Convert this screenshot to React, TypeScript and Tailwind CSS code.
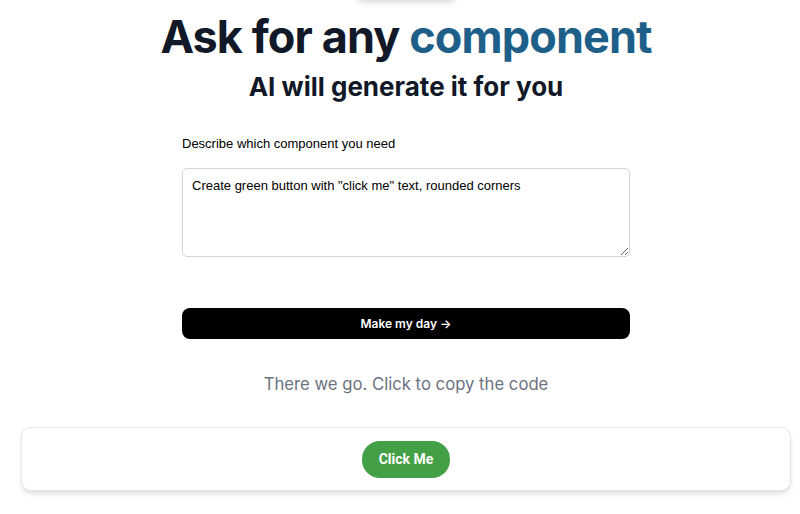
import React from "react";

export default function App() {
  return (
    <div className="w-[800px] h-[514px] overflow-hidden bg-white">
      <div className="w-[812px] flex flex-col items-center" style={{ fontFamily: "Inter, sans-serif" }}>
        <div className="w-[100px] h-[10px] -mt-[10px] rounded-full bg-white shadow-md" />
        <h1 className="mt-[14px] text-[45px] leading-[45px] font-bold tracking-[-0.02em] text-[#111827]">
          Ask for any <span className="text-[#1e5f8a]">component</span>
        </h1>
        <h2 className="mt-[12px] text-[26px] leading-[32px] font-bold text-[#111827]">
          AI will generate it for you
        </h2>
        <div className="w-[448px] mt-[31px] flex flex-col" style={{ fontFamily: "'Liberation Sans', Arial, sans-serif" }}>
          <label className="text-[13px] leading-[20px] font-medium text-black">Describe which component you need</label>
          <textarea
            className="mt-[14px] h-[89px] w-full resize-y rounded-[5px] border border-[#d1d5db] px-[9px] pt-[8px] pb-[6px] text-[13px] leading-[18px] text-black outline-none"
            defaultValue={'Create green button with "click me" text, rounded corners'}
            style={{ fontFamily: "'Liberation Sans', Arial, sans-serif" }}
          />
          <button
            className="mt-[51px] h-[31px] w-full rounded-[8px] bg-black text-white text-[12px] font-semibold"
            style={{ fontFamily: "Inter, sans-serif" }}
          >
            Make my day →
          </button>
        </div>
        <p className="mt-[33px] text-[16.7px] leading-[24px] text-[#6b7280]">There we go. Click to copy the code</p>
        <div className="mt-[31px] w-[770px] h-[64px] rounded-[10px] border border-[#e5e7eb] bg-white shadow-md flex items-center justify-center">
          <button
            className="h-[37px] w-[88px] rounded-[18px] bg-[#43a047] text-white text-[14px] font-bold"
            style={{ fontFamily: "Roboto, sans-serif" }}
          >
            Click Me
          </button>
        </div>
      </div>
    </div>
  );
}
